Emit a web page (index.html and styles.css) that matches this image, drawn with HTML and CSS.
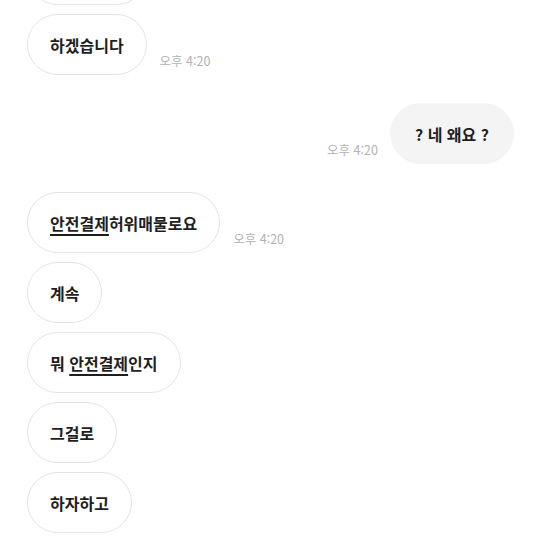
FILE: index.html
```html
<!DOCTYPE html>
<html lang="ko">
<head>
  <meta charset="UTF-8" />
  <title>채팅</title>
  <link rel="stylesheet" href="styles.css">
</head>
<body>

<div class="chat">
  <div class="group">
    <div class="row"><div class="bubble">알겠습니다</div></div>
    <div class="row">
      <div class="bubble">하겠습니다</div>
      <span class="time">오후 4:20</span>
    </div>
  </div>

  <div class="group">
    <div class="row mine">
      <span class="time">오후 4:20</span>
      <div class="bubble">? 네 왜요 ?</div>
    </div>
  </div>

  <div class="group">
    <div class="row">
      <div class="bubble"><span class="link">안전결제</span>허위매물로요</div>
      <span class="time">오후 4:20</span>
    </div>
    <div class="row"><div class="bubble">계속</div></div>
    <div class="row"><div class="bubble">뭐&nbsp;<span class="link">안전결제</span>인지</div></div>
    <div class="row"><div class="bubble">그걸로</div></div>
    <div class="row"><div class="bubble">하자하고</div></div>
    <div class="row"><div class="bubble">그래서</div></div>
  </div>
</div>

</body>
</html>
```

FILE: styles.css
```css
body {
  margin: 0;
  background: #ffffff;
  font-family: "Noto Sans CJK KR", "Noto Sans", sans-serif;
  color: #1f1f1f;
  overflow: hidden;
}

.chat {
  margin-top: -56px;
  padding: 0 26px 0 27px;
  display: flex;
  flex-direction: column;
  gap: 28px;
}

.group {
  display: flex;
  flex-direction: column;
  gap: 9px;
}

.row {
  display: flex;
  align-items: flex-end;
  gap: 13px;
}

.row.mine {
  justify-content: flex-end;
  gap: 12px;
}

.bubble {
  height: 61px;
  box-sizing: border-box;
  display: flex;
  align-items: center;
  padding: 0 22px;
  border: 1px solid #e4e4e4;
  border-radius: 31px;
  background: #ffffff;
  font-size: 16px;
  font-weight: 600;
  white-space: nowrap;
}

.mine .bubble {
  background: #f4f4f4;
  border-color: #f4f4f4;
  padding: 0 24px;
}

.link {
  text-decoration: underline;
  text-decoration-thickness: 1.5px;
  text-underline-offset: 4px;
}

.time {
  font-size: 12.5px;
  color: #b2b2b2;
  margin-bottom: 5px;
  white-space: nowrap;
}
```
